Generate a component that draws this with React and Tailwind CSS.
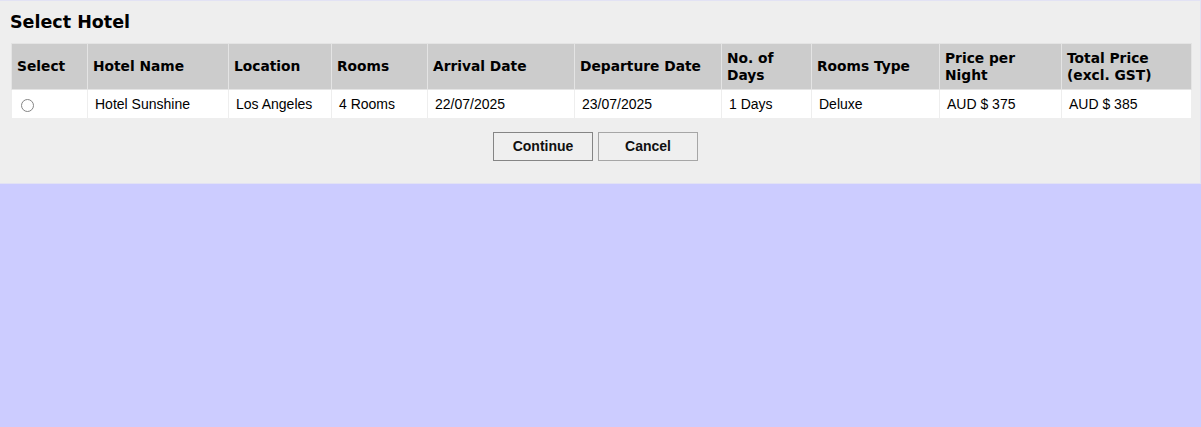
import React from "react";

const cols = [76, 141, 103, 96, 147, 147, 90, 128, 122, 130];
const headers = [
  "Select",
  "Hotel Name",
  "Location",
  "Rooms",
  "Arrival Date",
  "Departure Date",
  "No. of Days",
  "Rooms Type",
  "Price per Night",
  "Total Price (excl. GST)",
];
const row = [
  "Hotel Sunshine",
  "Los Angeles",
  "4 Rooms",
  "22/07/2025",
  "23/07/2025",
  "1 Days",
  "Deluxe",
  "AUD $ 375",
  "AUD $ 385",
];

export default function App() {
  return (
    <div className="min-h-[427px] bg-[#ccccff]">
      <div className="bg-[#eeeeee] border-t border-r border-b border-[#e2e2f4] pl-[11px] pr-[10px] pt-[10px] pb-[22px]">
        <h2
          className="text-[17.5px] leading-[22px] font-bold text-black -ml-px mb-[10px]"
          style={{ fontFamily: '"DejaVu Sans", Verdana, sans-serif' }}
        >
          Select Hotel
        </h2>
        <table className="w-full table-fixed border-collapse">
          <colgroup>
            {cols.map((w, i) => (
              <col key={i} style={{ width: w }} />
            ))}
          </colgroup>
          <thead>
            <tr className="bg-[#cccccc] h-[46px]">
              {headers.map((h) => (
                <th
                  key={h}
                  className="border border-[#e4e4e4] text-left align-middle font-bold text-[13.8px] leading-[17px] text-black px-[5px] py-[5px]"
                  style={{ fontFamily: '"DejaVu Sans", Verdana, sans-serif' }}
                >
                  {h}
                </th>
              ))}
            </tr>
          </thead>
          <tbody>
            <tr className="bg-white h-[29px]">
              <td className="border border-[#eeeeee] align-middle pl-[9px]">
                <span className="block mt-[2px] w-[13px] h-[13px] rounded-full border border-[#858585] bg-white" />
              </td>
              {row.map((c, i) => (
                <td
                  key={i}
                  className="border border-[#eeeeee] align-middle text-[14px] leading-[17px] text-black px-[7px] py-[5px] whitespace-nowrap"
                  style={{ fontFamily: '"Liberation Sans", Arial, sans-serif' }}
                >
                  {c}
                </td>
              ))}
            </tr>
          </tbody>
        </table>
        <div className="flex justify-center gap-[5px] mt-[13px] pr-[10px]">
          <button
            className="w-[100px] h-[29px] bg-[#efefef] border border-[#858585] text-[14px] font-bold text-[#111]"
            style={{ fontFamily: '"Liberation Sans", Arial, sans-serif' }}
          >
            Continue
          </button>
          <button
            className="w-[100px] h-[29px] bg-[#efefef] border border-[#a6a6a6] text-[14px] font-bold text-[#111]"
            style={{ fontFamily: '"Liberation Sans", Arial, sans-serif' }}
          >
            Cancel
          </button>
        </div>
      </div>
    </div>
  );
}
